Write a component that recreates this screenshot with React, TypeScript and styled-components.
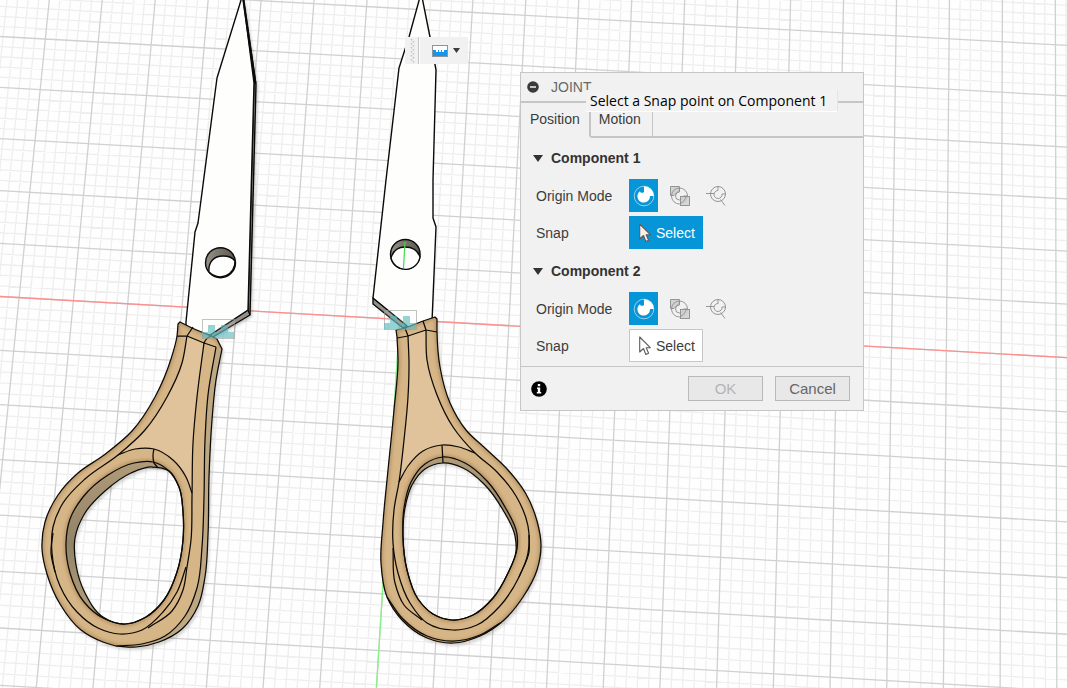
import React, { useState } from "react";
import styled, { createGlobalStyle } from "styled-components";

const GlobalStyle = createGlobalStyle`
  *, *::before, *::after { box-sizing: border-box; }
  body { margin: 0; background: #fefefe; font-family: "Liberation Sans", Arial, sans-serif; font-size: 14px; color: #3c3c3c; }
  button { font: inherit; color: inherit; padding: 0; margin: 0; border: 0; background: none; cursor: pointer; }
`;

const blue = "#0696d7";
const line = "#c6c6c6";
const panel = "#f1f1f1";

/* ---------- canvas geometry ---------- */

type Pt = [number, number];

/** Smooth run through a list of points; handles are scaled to each span's own length. */
function curve(pts: Pt[], closed = false): string {
  const n = pts.length;
  const at = (i: number): Pt =>
    closed ? pts[(i + n) % n] : pts[Math.max(0, Math.min(n - 1, i))];
  const direction = (i: number): Pt => {
    const [a, b, c] = [at(i - 1), at(i), at(i + 1)];
    const before = Math.hypot(b[0] - a[0], b[1] - a[1]) || 1e6;
    const after = Math.hypot(c[0] - b[0], c[1] - b[1]) || 1e6;
    const x = (b[0] - a[0]) / before ** 2 + (c[0] - b[0]) / after ** 2;
    const y = (b[1] - a[1]) / before ** 2 + (c[1] - b[1]) / after ** 2;
    const size = Math.hypot(x, y) || 1;
    return [x / size, y / size];
  };
  let d = `M${pts[0][0]} ${pts[0][1]}`;
  for (let i = 0; i < (closed ? n : n - 1); i++) {
    const [b, c, u, v] = [at(i), at(i + 1), direction(i), direction(i + 1)];
    const reach = Math.hypot(c[0] - b[0], c[1] - b[1]) / 3;
    d += `C${b[0] + u[0] * reach} ${b[1] + u[1] * reach} ${c[0] - v[0] * reach} ${c[1] - v[1] * reach} ${c[0]} ${c[1]}`;
  }
  return closed ? d + "Z" : d;
}
const join = (...parts: string[]) =>
  parts.map((p, i) => (i ? p.replace("M", "L") : p)).join("") + "Z";

const gridRow = (n: number) => {
  const y = 296.5 + 53.48 * n + 0.2955 * n * n;
  return `M0 ${y}L1067 ${y + 61.2 + 0.35 * n}`;
};
const gridCol = (n: number) => `M${49.3 + 52.95 * n} 0L${-20.5 + 56.7 * n} 688`;
const range = (from: number, to: number) =>
  Array.from({ length: to - from + 1 }, (_, i) => from + i);

const rowSteps = range(-38, 38);
const colSteps = range(-5, 110);
const minorGrid =
  rowSteps.filter((i) => i % 5).map((i) => gridRow(i / 5)).join("") +
  colSteps.filter((i) => i % 5).map((i) => gridCol(i / 5)).join("");
const majorGrid =
  rowSteps.filter((i) => i % 5 === 0).map((i) => gridRow(i / 5)).join("") +
  colSteps.filter((i) => i % 5 === 0).map((i) => gridCol(i / 5)).join("");

interface HandleShape {
  id: string;
  body: string;
  hole: string;
  rim: string;
  flat: string;
  side?: string;
  edges: string[];
}

const leftFlatL: Pt[] = [[187, 336], [182, 363], [167, 397], [145, 430], [118, 455]];
const leftFlatR: Pt[] = [[192, 493], [193, 443], [197, 397], [204, 343]];
const leftLoop: Pt[] = [[118, 455], [135, 449], [154, 449], [173, 460], [186, 477], [192, 493]];
const leftSide: Pt[] = [[216, 347], [208, 395], [205, 440], [204, 497], [202, 547], [197, 588], [185, 616], [165, 636], [142, 644], [116, 646]];
const leftBack: Pt[] = [[116, 646], [136, 647], [159, 642], [182, 629], [198, 606], [205, 577], [208, 535], [209, 477], [212, 420], [216, 380], [222, 349]];

const leftHandle: HandleShape = {
  id: "left",
  body: join(
    "M178 324L180 322L192 328L211 336L217 339L222 349",
    curve([...leftBack].reverse()),
    curve([[116, 646], [103, 642], [81, 630], [60, 604], [47, 574], [42, 549], [45, 522], [58, 495], [78, 473], [104, 455], [132, 431], [155, 397], [171, 359], [177, 336], [178, 324]])
  ),
  hole: curve([[169, 471], [152, 467], [131, 473], [105, 491], [85, 513], [75, 538], [76, 565], [85, 593], [103, 617], [125, 624], [146, 617], [164, 600], [177, 572], [183, 540], [183, 512], [179, 487]], true),
  rim: curve([[169, 471], [153, 462], [134, 463], [108, 475], [83, 497], [70, 519], [66, 543], [70, 573], [84, 602], [103, 618], [125, 624], [146, 617], [164, 600], [177, 572], [183, 540], [183, 512], [179, 487]], true),
  flat: join(curve(leftFlatL), curve(leftLoop), curve(leftFlatR)),
  side: join(curve(leftSide), curve([...leftBack])),
  edges: [
    curve([...leftFlatL, [85, 479], [63, 503], [53, 527], [52, 553], [60, 586], [77, 612], [98, 628], [120, 634], [142, 630], [163, 612], [177, 592], [186, 567]]),
    curve([[204, 343], [197, 397], [193, 443], [192, 497], [191, 540], [187, 567], [183, 590], [172, 611], [148, 628]]),
    curve([[53, 533], [51, 553], [55, 572]]),
    curve(leftLoop),
    curve(leftSide),
    "M177 336L187 336L204 343L216 347M193 327L187 336M211 336Q206 338 204 343M154 449Q152 456 154 463L158 468",
  ],
};

const rightFlatL: Pt[] = [[408, 336], [409, 363], [408, 397], [404, 440], [399, 482]];
const rightFlatR: Pt[] = [[426, 330], [427, 360], [437, 395], [453, 427], [475, 453]];
const rightLoop: Pt[] = [[399, 482], [408, 466], [423, 451], [442, 445], [459, 447], [475, 453]];

const rightHandle: HandleShape = {
  id: "right",
  body: join(
    "M396 330L405 328L423 321L435 317L437 319",
    curve([[437, 319], [437, 332], [440, 367], [450, 403], [466, 430], [486, 449], [508, 470], [526, 494], [537, 521], [541, 545], [537, 570], [523, 597], [503, 621], [480, 636], [453, 643], [427, 638], [402, 620], [387, 597], [381, 563], [383, 523], [388, 470], [394, 410], [398, 360], [397, 337]])
  ),
  hole: curve([[443, 463], [425, 469], [412, 485], [405, 508], [403, 537], [407, 570], [418, 599], [433, 614], [452, 620], [473, 615], [493, 598], [508, 573], [516, 551], [515, 536], [503, 510], [484, 484], [463, 468]], true),
  rim: curve([[443, 457], [425, 464], [411, 482], [404, 508], [403, 537], [407, 570], [418, 599], [433, 614], [452, 620], [473, 615], [493, 598], [508, 573], [517, 549], [517, 534], [505, 507], [487, 481], [465, 463]], true),
  flat: join(curve(rightFlatL), curve(rightLoop), curve([...rightFlatR].reverse())),
  edges: [
    curve([...rightFlatL, [394, 510], [393, 543], [398, 573], [410, 603], [427, 623], [453, 630], [477, 625], [500, 606], [519, 577], [528, 553], [528, 526], [516, 496], [497, 472], [475, 453], [453, 427], [437, 395], [427, 360], [426, 330]]),
    curve([[393, 548], [395, 583], [404, 605], [422, 620]]),
    curve([[529, 535], [529, 552], [519, 577]]),
    curve(rightLoop),
    curve([[387, 597], [403, 619], [427, 636], [453, 641], [480, 635], [500, 623]]),
    "M397 338L408 336L426 330L437 332M405 328L408 336M423 321L426 330M442 445L443 463",
  ],
};

function Handle({ shape }: { shape: HandleShape }) {
  return (
    <g>
      <clipPath id={`${shape.id}-clip`}>
        <path d={shape.body + shape.hole} clipRule="evenodd" />
      </clipPath>
      <path d={shape.body + shape.hole} fillRule="evenodd" fill="#000" opacity=".16" filter="url(#soft)" transform="translate(2 3)" />
      <path d={shape.body + shape.hole} fillRule="evenodd" fill="#d6b587" />
      <g clipPath={`url(#${shape.id}-clip)`}>
        <g fill="none" stroke="#a98656" strokeWidth="5" opacity=".6" filter="url(#soft)">
          <path d={shape.body} />
          <path d={shape.rim} />
        </g>
        <path d={shape.flat} fill="#e0c39b" />
        {shape.side && <path d={shape.side} fill="#bda883" />}
        <path d={shape.rim + shape.hole} fillRule="evenodd" fill="url(#wall)" />
      </g>
      <g fill="none" stroke="#0c0a06" strokeWidth="1.25" strokeLinejoin="round">
        <path d={shape.body} />
        <path d={shape.hole} />
        <path d={shape.rim} />
        {shape.edges.map((d) => <path key={d} d={d} />)}
      </g>
    </g>
  );
}

function SnapMark({ x, y }: { x: number; y: number }) {
  return (
    <g transform={`translate(${x} ${y})`}>
      <rect x=".5" y=".5" width="32" height="19" fill="#fff" fillOpacity=".15" stroke="#999" strokeOpacity=".6" />
      <path d="M0 13H6V6H13V13H19V6H26V13H32V19H0Z" fill="#55b8ba" fillOpacity=".62" />
    </g>
  );
}

const Drawing = styled.svg`
  position: absolute;
  inset: 0;
  width: 100%;
  height: 100%;
`;

function Scene() {
  return (
    <Drawing viewBox="0 0 1067 688" preserveAspectRatio="xMinYMin slice" role="img" aria-label="Scissor halves on the work plane">
      <defs>
        <filter id="soft" x="-20%" y="-20%" width="140%" height="140%"><feGaussianBlur stdDeviation="1.6" /></filter>
        <linearGradient id="wall" x1="0" y1="0" x2="0" y2="1">
          <stop offset="0" stopColor="#b09b77" />
          <stop offset=".5" stopColor="#928368" />
          <stop offset="1" stopColor="#b7a27d" />
        </linearGradient>
        <linearGradient id="bore" x1="0" y1="0" x2="1" y2="0">
          <stop offset="0" stopColor="#969187" />
          <stop offset="1" stopColor="#5d5850" />
        </linearGradient>
      </defs>
      <g fill="none">
        <path d={minorGrid} stroke="#eeeeee" strokeWidth="1.3" />
        <path d={majorGrid} stroke="#d0d0d0" strokeWidth="1.3" />
        <path d={gridRow(0)} stroke="#fe8f8f" strokeWidth="1.3" />
        <path d={gridCol(7)} stroke="#85f285" strokeWidth="1.3" />
      </g>

      <g stroke="#0a0a0a" strokeWidth="1.4" strokeLinejoin="round">
        <path d="M243 -3L256 85L250 315L212 337L186 326Z" fill="#000" stroke="none" opacity=".22" filter="url(#soft)" transform="translate(2 2)" />
        <path d="M243 -3L256 85L250 315L213 337L210 335L248 310L254 83Z" fill="#948f86" />
        <path d="M242 -3L217 78L198 223L195 232L186 322L186 330L210 335L248 310L254 83L243 -3Z" fill="#fefefd" />
        <path d="M243 -3L255.500 84" strokeWidth="2.2" />
        <path d="M248 310L250 315" />
        <circle cx="220.500" cy="262.700" r="15" fill="url(#bore)" />
        <path d="M209 272C208 262 214 256 223 256C229 256 233 258 235 261A15 15 0 0 1 209 272Z" fill="#fefefe" />
      </g>

      <g stroke="#0a0a0a" strokeWidth="1.4" strokeLinejoin="round">
        <path d="M373 298L373 304L403 328L408 326Z" fill="#948f86" />
        <path d="M420 -3L409 37L399 68L386 180L373 298L406 325L410 330L432 322L436 227L433 218L433 180L436 70L430 37L422 -3Z" fill="#fefefd" />
        <circle cx="405.300" cy="254.300" r="14.800" fill="url(#bore)" />
        <path d="M391 258C393 251 398 247 405 247C413 247 418 251 420 257A14.800 14.800 0 0 1 391 258Z" fill="#fefefe" />
        <path d="M405 242L403.500 268" stroke="#43dc43" strokeWidth="1.2" />
      </g>

      <Handle shape={leftHandle} />
      <Handle shape={rightHandle} />
      <SnapMark x={202} y={319} />
      <SnapMark x={384} y={310} />
    </Drawing>
  );
}

/* ---------- icons ---------- */

const Icon = styled.svg`
  display: block;
  flex: none;
`;

const SimpleOrigin = () => (
  <Icon width="22" height="22" viewBox="0 0 22 22" fill="none">
    <circle cx="11" cy="11" r="9.800" stroke="#b4e0f4" strokeWidth=".8" />
    <path d="M11 1.200A9.800 9.800 0 0 1 20.800 11L17 11A6.300 6.300 0 1 1 7 6.200C7.400 8 9.400 8.400 11 7Z" fill="#fff" />
  </Icon>
);

const BetweenFaces = () => (
  <Icon width="22" height="22" viewBox="0 0 22 22" fill="none" stroke="#8c8c8c" strokeWidth=".9">
    <path d="M1.500 1.500H10.500V5L5 10.500H1.500Z" fill="#d2d2d2" />
    <circle cx="10.500" cy="11" r="8" />
    <path d="M10.500 3V7A4 4 0 1 0 14.500 11H18.500" />
    <rect x="11.500" y="11.500" width="9" height="9" fill="#cfcfcf" fillOpacity=".8" />
    <path d="M17 12Q16 16 12 18" />
  </Icon>
);

const EdgeIntersection = () => (
  <Icon width="22" height="22" viewBox="0 0 22 22" fill="none" stroke="#8c8c8c" strokeWidth=".9">
    <circle cx="13" cy="9" r="7.500" />
    <path d="M1 8.500H9M13 1.500V5.500A4 4 0 1 0 17 9H20.500M15.500 14.500L20 20.500" />
  </Icon>
);

const Pointer = ({ active }: { active: boolean }) => (
  <Icon width="12" height="20" viewBox="0 0 12 20">
    <path d="M.7 1V16L4.500 12.500L6.800 18.500L9.600 17.200L7.200 11.700H11.300Z" fill={active ? "#f7f0ea" : "#fff"} stroke="#5c5c5c" strokeWidth="1.100" strokeLinejoin="round" />
  </Icon>
);

/* ---------- mini toolbar ---------- */

const Workspace = styled.main`
  position: relative;
  min-height: 100vh;
  overflow: hidden;
`;

const MiniBar = styled.div`
  position: absolute;
  left: 405px;
  top: 37px;
  display: flex;
  align-items: center;
  height: 27px;
  padding: 0 8px 0 5px;
  background: ${panel};
`;

const SnapToggle = styled.button`
  display: flex;
  align-items: center;
  gap: 5px;
  margin-left: 10px;
`;

function SnapBar() {
  return (
    <MiniBar>
      <Icon width="12" height="27" viewBox="0 0 12 27" fill="none">
        <path d="M1.500 2V26M3.500 4V26" stroke="#c2c2c2" strokeWidth="1.500" strokeDasharray="1.500 2.500" />
        <path d="M8.500 0V27" stroke="#c4c4c4" />
        <path d="M9.500 0V27" stroke="#fff" />
      </Icon>
      <SnapToggle aria-label="Snap options">
        <Icon width="16" height="12" viewBox="0 0 16 12">
          <rect x=".5" y=".5" width="15" height="11" fill="#fff" stroke="#8d9499" />
          <path d="M1 5H4V7H6V5H7V7H9V5H10V7H12V5H15V11H1Z" fill="#1496ee" />
        </Icon>
        <Icon width="7" height="5" viewBox="0 0 7 5"><path d="M0 0H7L3.500 5Z" fill="#3b3b3b" /></Icon>
      </SnapToggle>
    </MiniBar>
  );
}

/* ---------- joint dialog ---------- */

const Dialog = styled.section`
  position: absolute;
  left: 520px;
  top: 72px;
  width: 344px;
  background: ${panel};
  border: 1px solid ${line};
`;

const TitleBar = styled.header`
  display: flex;
  align-items: center;
  gap: 12px;
  height: 30px;
  padding-left: 6px;
  border-bottom: 2px solid ${line};
`;

const Title = styled.h1`
  margin: 0;
  font-size: 14px;
  font-weight: 400;
  color: #686868;
`;

const Tabs = styled.div`
  display: flex;
  height: 35px;
  padding-top: 1px;
`;

const Tab = styled.button<{ $active: boolean }>`
  padding: 0 ${(p) => (p.$active ? 9 : 11)}px 3px ${(p) => (p.$active ? 9 : 8)}px;
  border-right: ${(p) => (p.$active ? 2 : 1)}px solid ${line};
  border-bottom: 2px solid ${(p) => (p.$active ? panel : line)};
`;

const TabFill = styled.div`
  flex: 1;
  border-bottom: 2px solid ${line};
`;

const Body = styled.div`
  display: flex;
  flex-direction: column;
  gap: 12px;
  padding: 10px 12px 4px;
`;

const Group = styled.section`
  display: flex;
  flex-direction: column;
  gap: 4px;
`;

const GroupToggle = styled.button`
  display: flex;
  align-items: center;
  gap: 8px;
  height: 20px;
  margin-bottom: 7px;
  font-weight: 700;
  color: #333;
`;

const Field = styled.div`
  display: grid;
  grid-template-columns: 93px 1fr;
  align-items: center;
  height: 33px;
  padding-left: 3px;
`;

const Modes = styled.div`
  display: flex;
  gap: 7px;
`;

const Mode = styled.button<{ $active: boolean }>`
  display: grid;
  place-items: center;
  width: 29px;
  height: 33px;
  background: ${(p) => (p.$active ? blue : "transparent")};
`;

const SelectButton = styled.button<{ $active: boolean }>`
  display: flex;
  align-items: center;
  gap: 5px;
  justify-self: start;
  height: 33px;
  padding: 0 7px 0 9px;
  border: 1px solid ${(p) => (p.$active ? blue : line)};
  background: ${(p) => (p.$active ? blue : "#fff")};
  color: ${(p) => (p.$active ? "#fff" : "#3c3c3c")};
`;

const Footer = styled.footer`
  display: flex;
  align-items: center;
  gap: 12px;
  height: 44px;
  padding: 0 13px 0 10px;
  border-top: 1px solid ${line};
`;

const InfoButton = styled.button`
  margin-right: auto;
`;

const Action = styled.button`
  width: 75px;
  height: 25px;
  border: 1px solid #b9b9b9;
  background: #e8e8e8;
  font-size: 15px;
  color: #666;
  &:disabled { color: #b4b4b4; cursor: default; }
`;

const Hint = styled.div`
  position: absolute;
  left: 586px;
  top: 90px;
  padding: 0 10px 0 4px;
  background: #f2f2f2;
  border-right: 1px solid #e4e4e4;
  border-bottom: 1px solid #fff;
  font-family: "Open Sans", "Noto Sans", sans-serif;
  font-size: 14px;
  line-height: 21px;
  color: #000;
  white-space: nowrap;
`;

const modes = [
  { name: "Simple", Glyph: SimpleOrigin },
  { name: "Between two faces", Glyph: BetweenFaces },
  { name: "Two edge intersection", Glyph: EdgeIntersection },
];

interface ComponentGroupProps {
  title: string;
  picking: boolean;
  onPick: () => void;
}

function ComponentGroup({ title, picking, onPick }: ComponentGroupProps) {
  const [mode, setMode] = useState(0);
  const [open, setOpen] = useState(true);
  return (
    <Group>
      <GroupToggle aria-expanded={open} onClick={() => setOpen(!open)}>
        <Icon width="10" height="7" viewBox="0 0 10 7"><path d="M0 0H10L5 7Z" fill="#333" /></Icon>
        {title}
      </GroupToggle>
      {open && (
        <>
          <Field>
            <span>Origin Mode</span>
            <Modes role="group" aria-label="Origin Mode">
              {modes.map(({ name, Glyph }, i) => (
                <Mode key={name} $active={i === mode} aria-label={name} aria-pressed={i === mode} onClick={() => setMode(i)}>
                  <Glyph />
                </Mode>
              ))}
            </Modes>
          </Field>
          <Field>
            <span>Snap</span>
            <SelectButton $active={picking} aria-pressed={picking} onClick={onPick}>
              <Pointer active={picking} />
              Select
            </SelectButton>
          </Field>
        </>
      )}
    </Group>
  );
}

export default function App() {
  const [tab, setTab] = useState("Position");
  const [picking, setPicking] = useState("Component 1");
  return (
    <Workspace>
      <GlobalStyle />
      <Scene />
      <SnapBar />
      <Dialog role="dialog" aria-labelledby="joint-title">
        <TitleBar>
          <button aria-label="Collapse">
            <Icon width="12" height="12" viewBox="0 0 12 12">
              <circle cx="6" cy="6" r="5.800" fill="#3a3a3a" />
              <path d="M3 6H9" stroke="#e8e8e8" strokeWidth="1.600" />
            </Icon>
          </button>
          <Title id="joint-title">JOINT</Title>
        </TitleBar>
        <Tabs role="tablist">
          {["Position", "Motion"].map((name) => (
            <Tab key={name} role="tab" $active={tab === name} aria-selected={tab === name} onClick={() => setTab(name)}>
              {name}
            </Tab>
          ))}
          <TabFill />
        </Tabs>
        <Body>
          {["Component 1", "Component 2"].map((name) => (
            <ComponentGroup key={name} title={name} picking={picking === name} onPick={() => setPicking(name)} />
          ))}
        </Body>
        <Footer>
          <InfoButton aria-label="Information">
            <Icon width="16" height="16" viewBox="0 0 16 16">
              <circle cx="8" cy="8" r="7.800" fill="#000" />
              <path d="M6.800 3H9.200V5.200H6.800ZM6 6.500H9.200V11H10.200V12.500H5.800V11H6.800V8H6Z" fill="#fff" />
            </Icon>
          </InfoButton>
          <Action disabled>OK</Action>
          <Action>Cancel</Action>
        </Footer>
      </Dialog>
      <Hint role="tooltip">Select a Snap point on Component 1</Hint>
    </Workspace>
  );
}
